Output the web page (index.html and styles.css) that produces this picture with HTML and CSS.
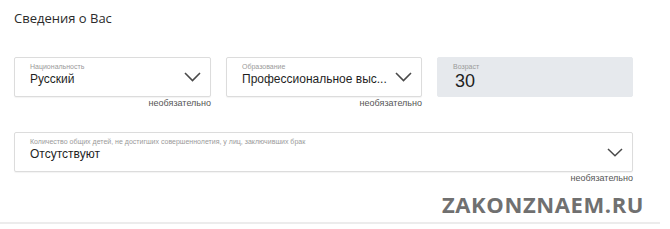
FILE: index.html
```html
<!DOCTYPE html>
<html lang="ru">
<head>
<meta charset="utf-8">
<link rel="stylesheet" href="styles.css">
</head>
<body>
<div class="page">
  <h2 class="title">Сведения о Вас</h2>
  <div class="row">
    <div class="cell">
      <div class="field">
        <div class="text">
          <div class="label">Национальность</div>
          <div class="value">Русский</div>
        </div>
        <svg class="chev" width="17" height="10" viewBox="0 0 17 10"><path d="M1 1 L8.5 8.5 L16 1" fill="none" stroke="#4a4a4a" stroke-width="1.6"/></svg>
      </div>
      <div class="hint">необязательно</div>
    </div>
    <div class="cell">
      <div class="field">
        <div class="text">
          <div class="label">Образование</div>
          <div class="value">Профессиональное выс...</div>
        </div>
        <svg class="chev" width="17" height="10" viewBox="0 0 17 10"><path d="M1 1 L8.5 8.5 L16 1" fill="none" stroke="#4a4a4a" stroke-width="1.6"/></svg>
      </div>
      <div class="hint">необязательно</div>
    </div>
    <div class="cell">
      <div class="field field-disabled">
        <div class="text">
          <div class="label">Возраст</div>
          <div class="value value-big">30</div>
        </div>
      </div>
    </div>
  </div>
  <div class="cell wide">
    <div class="field">
      <div class="text">
        <div class="label">Количество общих детей, не достигших совершеннолетия, у лиц, заключивших брак</div>
        <div class="value">Отсутствуют</div>
      </div>
      <svg class="chev" width="16" height="9" viewBox="0 0 16 9"><path d="M1 1 L8 7.8 L15 1" fill="none" stroke="#4a4a4a" stroke-width="1.5"/></svg>
    </div>
    <div class="hint">необязательно</div>
  </div>
  <div class="divider"></div>
  <div class="watermark">ZAKONZNAEM.RU</div>
</div>
</body>
</html>
```
FILE: styles.css
```css
html, body {
  margin: 0;
  padding: 0;
  background: #ffffff;
}
.page {
  position: relative;
  width: 670px;
  height: 229px;
  padding: 9px 0 0 14px;
  box-sizing: border-box;
  font-family: "Liberation Sans", Arial, sans-serif;
  color: #222;
}
.title {
  margin: 0;
  font-family: "Open Sans", sans-serif;
  font-weight: 400;
  font-size: 13px;
  line-height: 18px;
  color: #2b2b2b;
}
.row {
  display: grid;
  grid-template-columns: 197px 196px 196px;
  column-gap: 15px;
  margin-top: 30px;
}
.field {
  height: 40px;
  box-sizing: border-box;
  border: 1px solid #dcdcdc;
  border-radius: 2px;
  box-shadow: 0 1px 1px rgba(0,0,0,0.05);
  display: flex;
  align-items: center;
  gap: 4px;
  padding: 0 9px 0 15px;
  background: #fff;
}
.field-disabled {
  background: #e6e9ed;
  border-color: #e6e9ed;
  box-shadow: none;
}
.text {
  flex: 1;
  min-width: 0;
  align-self: flex-start;
  padding-top: 4px;
  display: flex;
  flex-direction: column;
}
.label {
  font-size: 7px;
  line-height: 9px;
  color: #9a9a9a;
  white-space: nowrap;
}
.value {
  font-size: 12px;
  line-height: 16px;
  color: #1f1f1f;
  white-space: nowrap;
}
.value-big {
  font-size: 18px;
  line-height: 20px;
  padding-left: 2px;
}
.chev {
  flex: none;
}
.hint {
  text-align: right;
  font-size: 9px;
  line-height: 11px;
  color: #555;
  margin-top: 1px;
}
.wide {
  width: 619px;
  margin-top: 23px;
}
.divider {
  position: absolute;
  left: 0;
  top: 222px;
  width: 660px;
  height: 2px;
  background: #ececec;
}
.watermark {
  position: absolute;
  left: 442px;
  top: 190px;
  font-family: "Open Sans", sans-serif;
  font-weight: 700;
  font-size: 22px;
  line-height: 28px;
  color: #707070;
  letter-spacing: 0.6px;
}
```
